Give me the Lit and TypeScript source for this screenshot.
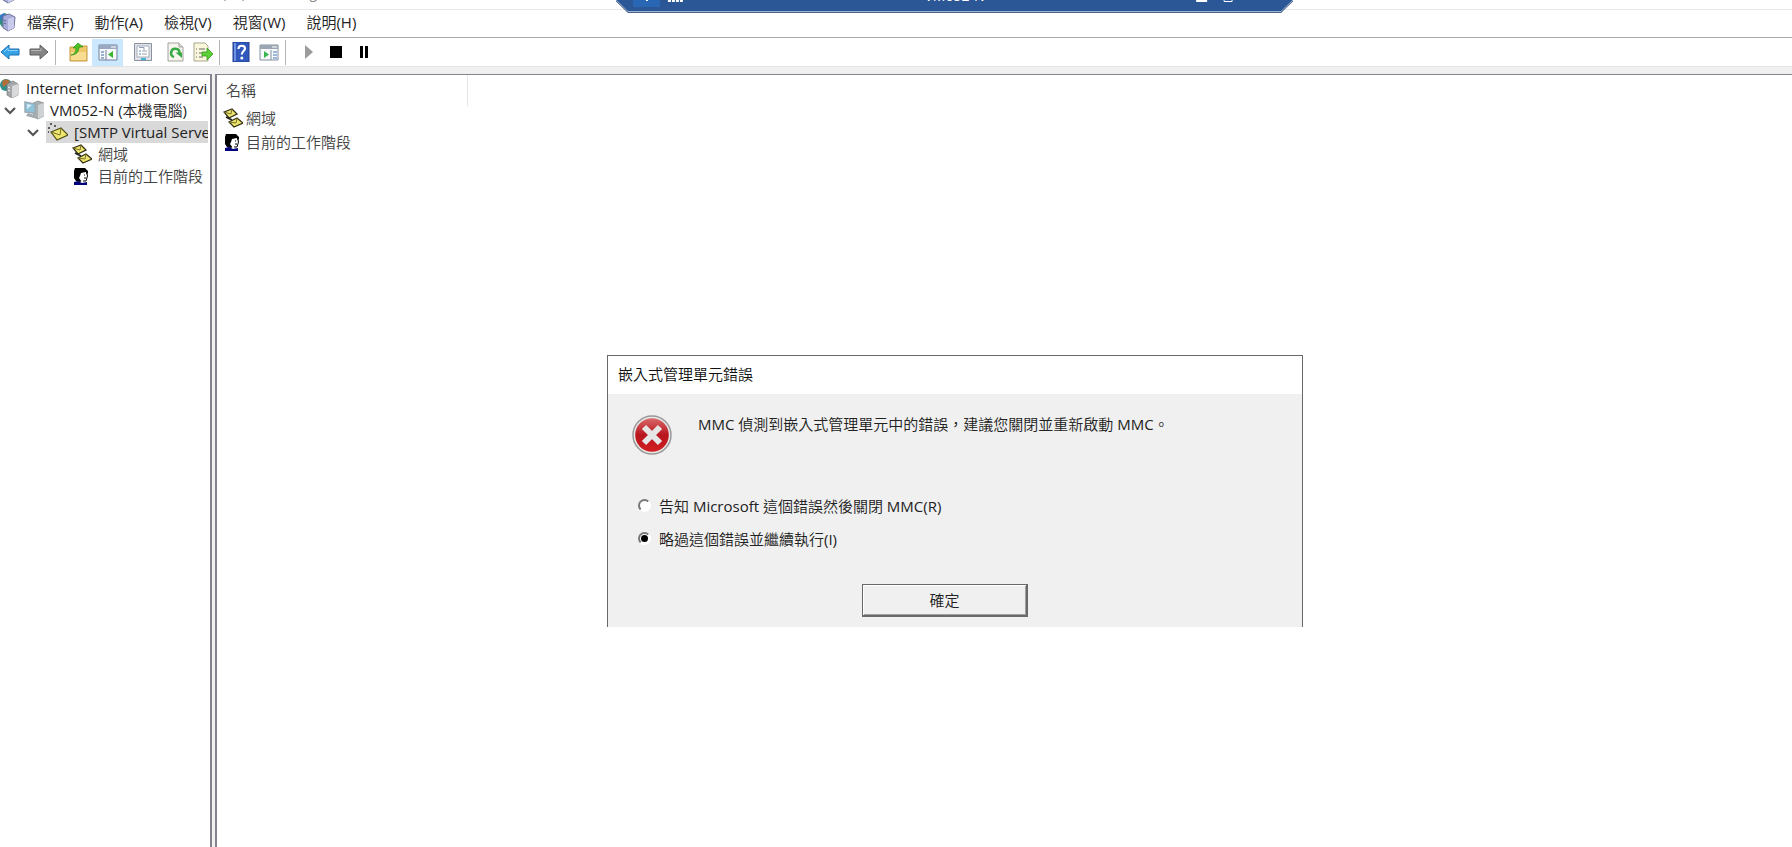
import { LitElement, html, css, svg } from "lit";
import { customElement, state } from "lit/decorators.js";

const shapes: Record<string, unknown> = {
  server: svg`<path d="M0 4 5 1 8 3 7 13 2 15 0 12Z" fill="#2f8f83"/><path d="M0 3 4 1 6 5 1 9Z" fill="#3a73c8"/><path d="M3 4 9 2 15 5 14 16 8 19 3 16Z" fill="#a9abd8" stroke="#73749f"/><path d="M8 7 14 5 14 16 8 19Z" fill="#c9cbed"/><path d="M4 8 6 9M4 11 6 12" stroke="#5c5e99"/>`,
  back: svg`<path d="M1 10 9 3V7H19V13H9V17Z" fill="#35a3e8" stroke="#1c6fae"/><path d="M4 10 8 6V8.500H18" fill="none" stroke="#8fd2fa"/>`,
  forward: svg`<path d="M19 10 11 3V7H1V13H11V17Z" fill="#858585" stroke="#5c5c5c"/><path d="M2 8.500H12V6" fill="none" stroke="#b5b5b5"/>`,
  folder: svg`<path d="M2 5H11L13 4H19V19H2Z" fill="#f0c869" stroke="#c49b45"/><path d="M3 10H18V18H3Z" fill="#f8dc92"/><path d="M3 13C7 12 8 9 8 6H5L10 1 15 5H11C11 10 8 13 3 13Z" fill="#4cc322" stroke="#2d8e16" stroke-width=".7"/>`,
  tree: svg`<path d="M1 3H19V18H1Z" fill="#f7f8fb" stroke="#71809b"/><path d="M1 3H19V7H1Z" fill="#9aa9c0"/><path d="M13 5H18" stroke="#fff"/><path d="M8 8V18" stroke="#71809b"/><path d="M3 10H6M3 13H6M3 16H6" stroke="#3869a8"/><path d="M15 9V16L10 12.500Z" fill="#3ab52d"/>`,
  props: svg`<path d="M1.500 1.500H18.500V18.500H1.500Z" fill="#dfe3e9" stroke="#8b929d"/><path d="M4 4H16V15H4Z" fill="#fff" stroke="#a6adb8"/><path d="M6 5.500H11V8" fill="none" stroke="#8fa0b5"/><path d="M6 9H8M6 12H8" stroke="#5790bd"/><path d="M9 9H14M9 12H14" stroke="#9aa2ad"/><path d="M8 17H13" stroke="#43b3d5" stroke-width="2"/>`,
  refresh: svg`<path d="M3 1H14L18 5V19H3Z" fill="#f6f5ee" stroke="#a2a29b"/><path d="M14 1V5H18" fill="#ddd" stroke="#a2a29b"/><path d="M9 15A4.200 4.200 0 1 1 14.500 11" fill="none" stroke="#35a942" stroke-width="2.500"/><path d="M10.500 10.500H17V16Z" fill="#35a942"/>`,
  exportList: svg`<path d="M1 1H12L15 4V19H1Z" fill="#fbf7dc" stroke="#aaa78e"/><path d="M3 7H4M3 11H4M3 15H4M6 7H12M6 11H10M6 15H10" stroke="#666"/><path d="M9 10H14V6L20 12 14 18V14H9Z" fill="#5bd037" stroke="#31991e" stroke-width=".8"/>`,
  help: svg`<path d="M2 0H18V20H2Z" fill="#3159bd" stroke="#233f8f"/><path d="M3 1H5V19H3Z" fill="#6f92e3"/><path d="M7.500 7C7.500 2.500 14 3 14 6.500 14 9 10.800 9 10.800 12.500" fill="none" stroke="#fff" stroke-width="2.200"/><circle cx="10.800" cy="16" r="1.500" fill="#fff"/>`,
  action: svg`<path d="M1 3H19V18H1Z" fill="#f7f8fb" stroke="#8290a0"/><path d="M1 3H19V7H1Z" fill="#9ca6b2"/><path d="M13 5H18" stroke="#fff"/><path d="M12 8V18" stroke="#8290a0"/><path d="M14 10H18M14 13H18M14 16H18" stroke="#4277bc"/><path d="M5 9V16L10 12.500Z" fill="#3ab54c"/>`,
  play: svg`<path d="M8 3 16 10 8 17Z" fill="#9b9b9b"/>`,
  stop: svg`<path d="M5 4H17V16H5Z" fill="#000"/>`,
  pause: svg`<path d="M7 4H10V16H7ZM12 4H15V16H12Z" fill="#000"/>`,
  iis: svg`<circle cx="6" cy="7" r="6" fill="#2f8f8c"/><path d="M2 4 5 1 10 3 8 6 3 9Z" fill="#b56e35"/><path d="M7 6 13 3 18 6V17L12 20 7 17Z" fill="#a4a8ab" stroke="#74797c" stroke-width=".7"/><path d="M12 8 18 6V17L12 20Z" fill="#d7d9da"/><path d="M8 9 10 10M8 12 10 13" stroke="#fff"/>`,
  computer: svg`<path d="M9 3 14 1 20 3V16L14 19 9 17Z" fill="#a9aeb1" stroke="#878d92" stroke-width=".7"/><path d="M14 5 20 3V16L14 19Z" fill="#cfd2d4"/><path d="M1 2 11 4V13L1 12Z" fill="#8fc3da" stroke="#9babb5" stroke-width="1.500"/><path d="M3 4 8 5 3 9Z" fill="#d2ecf6"/><path d="M4 13 8 14 10 18 2 16Z" fill="#a3abb0"/>`,
  mail: svg`<path d="M3 10 13 6 20 13 9 18Z" fill="#eee66e" stroke="#54511c" stroke-width="1.200"/><path d="M3 10 12 13 13 6" fill="none" stroke="#77722a"/><path d="M0 6H2M2 2H4M6 4H8M0 10H1" stroke="#333" stroke-width="1.500"/>`,
  domains: svg`<path d="M1 4 9 1 14 6 6 10Z" fill="#eee66e" stroke="#333016" stroke-width="1.300"/><path d="M1 4 8 6 9 1" fill="none" stroke="#77722a"/><path d="M6 14 14 10 20 15 11 19Z" fill="#eee66e" stroke="#333016" stroke-width="1.300"/><path d="M6 14 13 15 14 10" fill="none" stroke="#77722a"/><path d="M3 9 9 12" stroke="#222" stroke-width="1.800"/>`,
  person: svg`<path d="M3 2H13L16 5V7L14 9 11 14 8 16 4 15 2 12V5Z" fill="#000"/><path d="M9 7 14 6 15 10 14 15 10 16 7 12 8 10Z" fill="#fff"/><path d="M14.500 5 15.500 10 14 15H11" fill="none" stroke="#000"/><path d="M12 9H13M12 12H14" stroke="#000"/><path d="M2 16 6 15 10 17 15 16V19H2Z" fill="#00007c"/>`,
  chevron: svg`<path d="M5 8 10 13 15 8" fill="none" stroke="#555" stroke-width="2.200"/>`,
};

const icon = (name: string) =>
  html`<svg class="icon" viewBox="0 0 20 20" aria-hidden="true">${shapes[name]}</svg>`;

@customElement("app-root")
export class AppRoot extends LitElement {
  @state() private choice = "ignore";

  static styles = css`
    :host { display: flex; flex-direction: column; height: 100vh; overflow: hidden; position: relative;
      background: #f0f0f0; color: #222; font: 15px/22px "Open Sans", "Noto Sans CJK TC DemiLight", "Noto Sans CJK TC", sans-serif; font-weight: 400; }
    * { box-sizing: border-box; }
    button, input { font: inherit; color: inherit; margin: 0; }
    button { border: 0; background: none; padding: 0; }
    .icon { width: 20px; height: 20px; flex: none; display: block; }
    .titlebar { display: flex; align-items: flex-end; height: 10px; flex: none; overflow: hidden; background: #fff;
      border-bottom: 1px solid #e8e8e8; padding: 0 0 5px; gap: 8px; color: #888; font-size: 14px; white-space: nowrap; }
    .menubar { display: flex; align-items: center; height: 27px; flex: none; background: #fff; gap: 21px; padding-bottom: 3px; }
    .menubar .icon { margin-right: -14px; }
    .menubar button { white-space: nowrap; }
    .toolbar { display: flex; align-items: center; height: 30px; flex: none; background: #fff;
      border-top: 1px solid #a8a8a8; border-bottom: 1px solid #e4e4e4; }
    .toolbar button { display: grid; place-items: center; width: 28px; height: 27px; }
    .toolbar .back { width: 22px; padding-right: 2px; }
    .toolbar .forward { width: 31px; padding-left: 2px; }
    .toolbar .folder { width: 29px; }
    .toolbar .tree { background: #cce8ff; width: 31px; }
    .toolbar .props { width: 38px; padding-left: 2px; }
    .rule { width: 1px; height: 25px; background: #b5b5b5; margin: 0 7px 0 2px; }
    .panes { display: grid; grid-template-columns: 212px 1fr; gap: 3px; flex: 1; min-height: 0; padding-top: 7px; }
    .pane { background: #fff; border: solid #82838c; border-width: 1px 0 0 2px; overflow: hidden; }
    .side { border-width: 1px 2px 0 0; padding: 2px 2px 0 0; }
    ul { list-style: none; margin: 0; padding: 0; }
    .node { display: flex; align-items: center; height: 22px; overflow: hidden; white-space: nowrap; }
    .node .label { display: flex; align-items: center; gap: 6px; flex: 1; height: 22px; min-width: 0; }
    .twist { width: 20px; height: 20px; flex: none; }
    .lv1 .label { margin-left: 4px; }
    .lv2 { padding-left: 23px; }
    .lv2 .label { margin-left: 3px; padding-left: 2px; }
    .lv3 { padding-left: 72px; }
    .picked .label { background: #d9d9d9; }
    table { border-collapse: collapse; }
    th { width: 250px; height: 31px; padding: 0 0 2px 9px; text-align: left; font-weight: 400; border-right: 1px solid #e5e5e5; color: #444; }
    td { padding: 0 0 0 6px; height: 24px; }
    .entry { display: flex; align-items: center; gap: 3px; white-space: nowrap; }
    .cjk { color: #444; }
    .remote { position: absolute; top: 0; left: 50%; width: 677px; margin-left: -280px; height: 13px; overflow: hidden; }
    .band { display: block; width: 100%; height: 13px; }
    .machine { position: absolute; left: 0; right: 0; bottom: 8px; text-align: center; color: #fff; font-size: 14px; line-height: 18px; }
    .dialog { position: absolute; top: 355px; left: 607px; width: 696px; border: 1px solid #696969; border-bottom: 0; background: #f0f0f0; }
    .dialog h1 { margin: 0; height: 38px; padding: 0 10px; background: #fff; font-size: 15px; font-weight: 400; line-height: 36px; color: #111; }
    .message { display: flex; gap: 26px; padding: 19px 24px 0; height: 89px; }
    .message p { margin: 0; }
    .error { width: 40px; height: 40px; flex: none; margin-top: 2px; }
    fieldset { border: 0; margin: 0; padding: 6px 30px 0; }
    .option { display: flex; align-items: center; gap: 8px; height: 33px; }
    .option input { appearance: none; width: 13px; height: 13px; border-radius: 50%; background: #fff;
      border: 2px solid; border-color: #777 #fff #fff #777; display: grid; place-items: center; }
    .option input:checked::after { content: ""; width: 7px; height: 7px; border-radius: 50%; background: #000; }
    .actions { display: flex; justify-content: center; padding: 29px 20px 10px 0; }
    .ok { width: 166px; height: 33px; border: solid #696969; border-width: 1px 2px 2px 1px; box-shadow: inset 1px 1px #fff, inset -1px -1px #a0a0a0; background: #f0f0f0; }
  `;

  private tool(name: string, label: string) {
    return html`<button class=${name} aria-label=${label}>${icon(name)}</button>`;
  }

  private option(value: string, label: string) {
    return html`<label class="option"><input type="radio" name="choice" .checked=${this.choice === value}
      @change=${() => (this.choice = value)} /><span>${label}</span></label>`;
  }

  render() {
    return html`
      <header class="titlebar">${icon("server")}<span>Internet Information Services (IIS) 6.0 Manager</span></header>
      <nav class="menubar">${icon("server")}
        ${["檔案(F)", "動作(A)", "檢視(V)", "視窗(W)", "說明(H)"].map((m) => html`<button>${m}</button>`)}
      </nav>
      <div class="toolbar" role="toolbar">
        ${this.tool("back", "上一頁")}${this.tool("forward", "下一頁")}<span class="rule"></span>
        ${this.tool("folder", "上移一層")}${this.tool("tree", "顯示主控台樹狀目錄")}
        ${this.tool("props", "內容")}${this.tool("refresh", "重新整理")}${this.tool("exportList", "匯出清單")}<span class="rule"></span>
        ${this.tool("help", "說明")}${this.tool("action", "顯示動作窗格")}<span class="rule"></span>
        ${this.tool("play", "啟動")}${this.tool("stop", "停止")}${this.tool("pause", "暫停")}
      </div>
      <main class="panes">
        <nav class="pane side"><ul>
          <li class="node"><span class="label">${icon("iis")}Internet Information Services</span></li>
          <li class="node lv1"><button class="twist" aria-label="收合">${icon("chevron")}</button><span class="label">${icon("computer")}VM052-N (本機電腦)</span></li>
          <li class="node lv2 picked"><button class="twist" aria-label="收合">${icon("chevron")}</button><span class="label">${icon("mail")}[SMTP Virtual Server #1]</span></li>
          <li class="node lv3"><span class="label cjk">${icon("domains")}網域</span></li>
          <li class="node lv3"><span class="label cjk">${icon("person")}目前的工作階段</span></li>
        </ul></nav>
        <section class="pane"><table>
          <thead><tr><th scope="col">名稱</th></tr></thead>
          <tbody>
            <tr><td><span class="entry cjk">${icon("domains")}網域</span></td></tr>
            <tr><td><span class="entry cjk">${icon("person")}目前的工作階段</span></td></tr>
          </tbody>
        </table></section>
      </main>
      <div class="remote">
        <svg class="band" viewBox="0 0 678 13" preserveAspectRatio="none" aria-hidden="true">
          <path d="M0 0H678L666 12.500H12Z" fill="#2b5797"/><path d="M0 0 12 11.500H666L678 0" fill="none" stroke="#9db4d4"/><path d="M0 1 12 12.500H666L678 1" fill="none" stroke="#4c6388"/>
          <path d="M17 0H44V7H17Z" fill="#2966b3"/><path d="M30 0H32V1H30ZM52 0H55V2H52ZM56 0H59V2H56ZM60 0H63V2H60ZM64 0H67V2H64Z" fill="#fff"/>
          <path d="M581 0H592V2H581Z" fill="#fff"/><path d="M609 0V1.500H617V0" fill="none" stroke="#fff"/>
        </svg>
        <span class="machine">VM052-N</span>
      </div>
      <section class="dialog" role="dialog" aria-labelledby="dlg-title">
        <h1 id="dlg-title">嵌入式管理單元錯誤</h1>
        <div class="message">
          <svg class="error" viewBox="0 0 40 40" aria-hidden="true">
            <defs><linearGradient id="red" x2="0" y2="1"><stop stop-color="#d9696b"/><stop offset=".5" stop-color="#b8151c"/><stop offset="1" stop-color="#d21f22"/></linearGradient></defs>
            <circle cx="20" cy="20" r="19" fill="#e8e8e8" stroke="#999" stroke-width="1.500"/><circle cx="20" cy="20" r="16.800" fill="url(#red)"/>
            <path d="M12 12 28 28M28 12 12 28" stroke="#e6e6e6" stroke-width="6"/>
          </svg>
          <p>MMC 偵測到嵌入式管理單元中的錯誤，建議您關閉並重新啟動 MMC。</p>
        </div>
        <fieldset>
          ${this.option("report", "告知 Microsoft 這個錯誤然後關閉 MMC(R)")}
          ${this.option("ignore", "略過這個錯誤並繼續執行(I)")}
        </fieldset>
        <div class="actions"><button class="ok">確定</button></div>
      </section>
    `;
  }
}
